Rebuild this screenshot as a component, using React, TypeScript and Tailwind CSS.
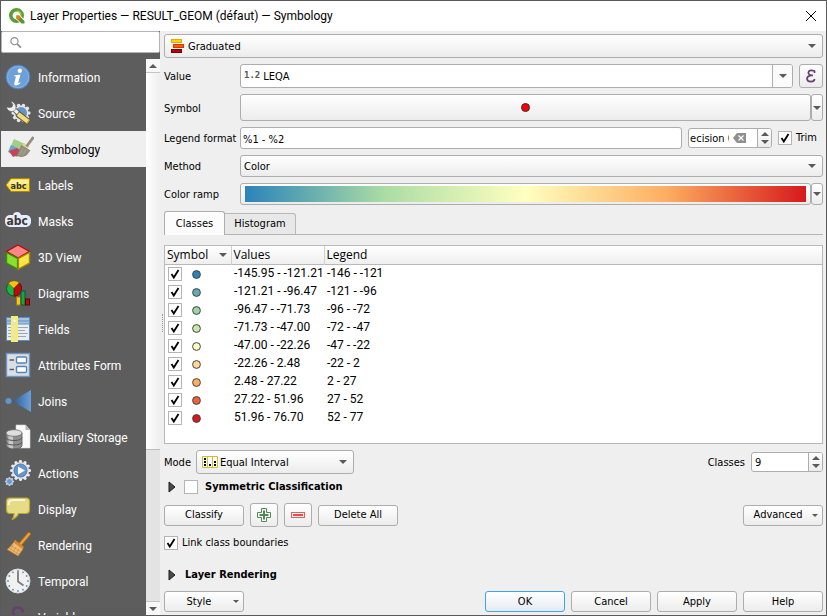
import { useId, useState } from "react";
import type { ReactNode } from "react";

const FRAME = "rounded-[3px] border border-[#adadad]";
const RAISED = "rounded-[3px] border border-[#adadad] bg-linear-to-b from-white to-[#ececec]";

function Triangle({ up = false, small = false }: { up?: boolean; small?: boolean }) {
  return (
    <svg
      className="block shrink-0"
      width={small ? 6 : 8}
      height={small ? 3 : 4}
      viewBox="0 0 8 4"
      aria-hidden="true"
    >
      <path d={up ? "M0 4L4 0L8 4Z" : "M0 0L4 4L8 0Z"} fill="#5a5a5a" />
    </svg>
  );
}

function Expander() {
  return (
    <svg className="block" width="8" height="12" viewBox="0 0 8 12" aria-hidden="true">
      <path d="M1 1L7 6L1 11Z" fill="#4a4a4a" stroke="#1c1c1c" />
    </svg>
  );
}

function Tick({ label, checked = false, id }: { label?: string; checked?: boolean; id?: string }) {
  const [on, setOn] = useState(checked);
  return (
    <span className="relative block size-[14px] shrink-0">
      <input
        id={id}
        type="checkbox"
        aria-label={label}
        checked={on}
        onChange={(e) => setOn(e.target.checked)}
        className="peer block size-[14px] appearance-none border border-[#b4b4b4] bg-white"
      />
      <svg
        className="pointer-events-none absolute inset-0 hidden peer-checked:block"
        width="14"
        height="14"
        viewBox="0 0 14 14"
        fill="none"
        stroke="#000"
        strokeWidth="1.8"
        aria-hidden="true"
      >
        <path d="M3.500 7L5.800 10.500L10.500 3" />
      </svg>
    </span>
  );
}

function Combo({
  id,
  value,
  icon,
  className,
  textClass,
}: {
  id: string;
  value: string;
  icon?: ReactNode;
  className: string;
  textClass: string;
}) {
  return (
    <div className={`relative ${className}`}>
      <select id={id} className={`block size-full appearance-none pt-[2px] ${RAISED} ${textClass}`}>
        <option>{value}</option>
      </select>
      {icon && (
        <span className="pointer-events-none absolute inset-y-0 left-[6px] flex items-center">{icon}</span>
      )}
      <span className="pointer-events-none absolute inset-y-0 right-[7px] flex items-center">
        <Triangle />
      </span>
    </div>
  );
}

function SpinArrows({ name }: { name: string }) {
  return (
    <span className="flex w-[14px] shrink-0 flex-col border-l border-[#adadad] bg-linear-to-b from-white to-[#ececec]">
      <button aria-label={`Increase ${name}`} className="flex flex-1 items-end justify-center pb-[2px]">
        <Triangle up />
      </button>
      <button aria-label={`Decrease ${name}`} className="flex flex-1 items-start justify-center pt-[2px]">
        <Triangle />
      </button>
    </span>
  );
}

function PushButton({ children, primary = false }: { children: ReactNode; primary?: boolean }) {
  return (
    <button
      className={`flex h-[21px] w-20 items-center justify-center rounded-[3px] border bg-linear-to-b from-white ${
        primary ? "border-[#3fa4f0] to-[#e4ebf2]" : "border-[#adadad] to-[#ececec]"
      }`}
    >
      {children}
    </button>
  );
}

function MenuButton({ children }: { children: ReactNode }) {
  return (
    <button className={`flex h-[21px] w-20 items-center pr-[4px] ${RAISED}`}>
      <span className="flex-1 text-center">{children}</span>
      <Triangle small />
    </button>
  );
}

function Icon({ children }: { children: ReactNode }) {
  return (
    <svg width="26" height="26" viewBox="0 0 26 26" className="block shrink-0" aria-hidden="true">
      {children}
    </svg>
  );
}

const gearTeeth = (cx: number, cy: number, r: number, n: number) =>
  Array.from({ length: n }, (_, i) => {
    const a = (i * 2 * Math.PI) / n;
    return { x: cx + r * Math.cos(a), y: cy + r * Math.sin(a) };
  });

const InformationIcon = (
  <Icon>
    <circle cx="13" cy="13" r="12" fill="#6e9fd6" stroke="#4a80bd" />
    <circle cx="13" cy="13" r="10.5" fill="none" stroke="#85b0e0" />
    <circle cx="14.8" cy="6.8" r="2.2" fill="#fff" />
    <path d="M9.5 11.2L15.5 10.6L13.3 18.2Q13 19.6 15.5 18.2L15.2 19.5Q12.5 21.8 10 21.3Q8.8 20.8 9.3 18.8L11 12.6L9.2 12.3Z" fill="#fff" />
  </Icon>
);

const SourceIcon = (
  <Icon>
    {gearTeeth(16, 13, 7.8, 10).map((p, i) => (
      <circle key={i} cx={p.x} cy={p.y} r="1.800" fill="#e4e6ea" />
    ))}
    <circle cx="16" cy="13" r="7.500" fill="#e4e6ea" />
    <circle cx="16" cy="13" r="6" fill="#6594c8" />
    <path d="M7 7.500L15 15" stroke="#4c4c4c" strokeWidth="4.600" />
    <path d="M7 7.500L15 15" stroke="#f0f0ee" strokeWidth="3.200" />
    <path d="M1.500 7C2 10.500 5.500 12.500 9 11C11.500 9.500 11.500 5.500 9.500 3.500C8.500 2 7 1.300 5.500 1.500L7.800 4.300L7 7L4.500 7.600Z" fill="#efefed" stroke="#5a5a5a" strokeWidth=".6" />
    <path d="M12.500 13.500L24 22.500" stroke="#5f5320" strokeWidth="6.200" />
    <path d="M13 14L23.500 22" stroke="#efdc83" strokeWidth="4.400" />
    <path d="M21.500 23.500L24.600 19.500" stroke="#b39832" />
  </Icon>
);

const SymbologyIcon = (
  <Icon>
    <path d="M6 3L17 8L12 13L3 10Z" fill="#9fce84" />
    <path d="M3 9L12 13L9 21L0 16Z" fill="#6ba6c8" />
    <path d="M1 15L9 12L15 17L5 21Z" fill="#c94358" />
    <path d="M16 7L21 10L18 16L12 12Z" fill="#dcd6a0" />
    <path d="M25.500 1L18.500 10.500" stroke="#968e7b" strokeWidth="2.800" />
    <path d="M13.500 9.500L22 14.500L18.500 19Q14 22 8.500 19.500Q11.500 15 13.500 9.500Z" fill="#969280" stroke="#76725f" strokeWidth=".6" />
    <path d="M15 12L11.500 19M18 13.500L14.500 19.500" stroke="#b0ac99" strokeWidth=".7" />
  </Icon>
);

const LabelsIcon = (
  <Icon>
    <path d="M1 13L6 6.500H24.500V19.500H6Z" fill="#fbe04b" stroke="#a98b08" />
    <path d="M3 12.500L6.500 8H23.500V11.500Z" fill="#fff09b" />
    <text x="5.500" y="16.500" fontSize="9" fontWeight="700" fontFamily="DejaVu Sans Condensed, DejaVu Sans, sans-serif" fill="#333">
      abc
    </text>
  </Icon>
);

const MasksIcon = (
  <Icon>
    <rect x="0" y="7" width="26" height="12" rx="5" fill="#e9edfb" />
    <rect x="8" y="4" width="8" height="12" rx="4" fill="#e9edfb" />
    <text x="1.500" y="17" fontSize="12" fontWeight="700" fontFamily="DejaVu Sans Condensed, DejaVu Sans, sans-serif" fill="#3a3a3a">
      abc
    </text>
  </Icon>
);

const CubeIcon = (
  <Icon>
    <path d="M13 1L24.500 7.500L13 14L1.500 7.500Z" fill="#fb8787" stroke="#b50d0d" strokeWidth="1.400" />
    <path d="M1.500 8.500L12.600 14.500V25L1.500 19Z" fill="#8be02f" stroke="#3d8c10" strokeWidth="1.400" />
    <path d="M24.500 8.500L13.400 14.500V25L24.500 19Z" fill="#fde548" stroke="#a38a09" strokeWidth="1.400" />
  </Icon>
);

const DiagramsIcon = (
  <Icon>
    <circle cx="9" cy="8.500" r="7.500" fill="#19b348" stroke="#075d20" />
    <path d="M9 8.500L3.300 3.200A7.800 7.800 0 0 1 14.500 3Z" fill="#fdbf10" stroke="#87640a" strokeWidth=".7" />
    <path d="M9 8.500L14.500 3A7.800 7.800 0 0 1 9 16.200Z" fill="#bb0c0c" stroke="#5e0303" strokeWidth=".7" />
    <rect x="11.500" y="17" width="4" height="8" fill="#fdc21b" stroke="#a77d05" />
    <rect x="16" y="11" width="4" height="14" fill="#16a351" stroke="#075b28" />
    <rect x="20.500" y="19" width="4" height="6" fill="#b40b0b" stroke="#5e0303" />
  </Icon>
);

const FieldsIcon = (
  <Icon>
    <rect x="1.500" y="1.500" width="23" height="23" fill="#e9eef3" stroke="#5d8dbf" />
    <rect x="2" y="2" width="22" height="6" fill="#a5c4e4" />
    <path d="M2 5H24M2 8H24" stroke="#5d8dbf" />
    <path d="M3 11.500H23M3 14.500H20M3 17.500H23M3 20.500H21" stroke="#9aa8b6" strokeWidth="1.200" />
    <rect x="6" y="0" width="7" height="26" fill="#f8ee5e" />
    <rect x="7.500" y="1" width="4" height="24" fill="#efe6a2" />
    <circle cx="9.500" cy="5" r="1.200" fill="#fff" />
  </Icon>
);

const FormIcon = (
  <Icon>
    <rect x="1.500" y="1.500" width="23" height="23" fill="#dcdfe2" stroke="#6b97c7" strokeWidth="1.400" />
    <rect x="11.500" y="5" width="10" height="6" rx="1" fill="#fff" stroke="#5486bb" strokeWidth="1.400" />
    <rect x="11.500" y="14.500" width="10" height="6" rx="1" fill="#fff" stroke="#5486bb" strokeWidth="1.400" />
    <path d="M4.500 8H9M4.500 17.500H9" stroke="#555f6b" strokeWidth="1.600" />
  </Icon>
);

const JoinsIcon = (
  <Icon>
    <defs>
      <linearGradient id="join" x1="0" x2="1">
        <stop offset="0" stopColor="#2f5b8f" />
        <stop offset="1" stopColor="#6ba0dc" />
      </linearGradient>
    </defs>
    <path d="M7.500 13L26 2V24Z" fill="url(#join)" />
    <circle cx="3.500" cy="13" r="3" fill="#5f94cf" />
  </Icon>
);

const StorageIcon = (
  <Icon>
    <path d="M11 1H20.500L25 6V24H11Z" fill="#fafafa" stroke="#d8d8d8" strokeWidth=".6" />
    <path d="M20.500 1V6H25Z" fill="#b8b8b8" />
    <path d="M1 9V21.500C1 26 17 26 17 21.500V9Z" fill="#8f8f8f" stroke="#565656" strokeWidth=".8" />
    <path d="M3.500 11V23Q6 24.500 8 24.500V12Z" fill="#c9c9c9" />
    <path d="M1 13.500C1 17.500 17 17.500 17 13.500M1 18C1 22 17 22 17 18" fill="none" stroke="#565656" />
    <ellipse cx="9" cy="9" rx="8" ry="3.300" fill="#dedede" stroke="#6d6d6d" strokeWidth=".8" />
  </Icon>
);

const ActionsIcon = (
  <Icon>
    {gearTeeth(15.5, 10.5, 9, 12).map((p, i) => (
      <circle key={i} cx={p.x} cy={p.y} r="1.600" fill="#e8e9ec" />
    ))}
    <circle cx="15.500" cy="10.500" r="8.600" fill="#e8e9ec" />
    <circle cx="15.500" cy="10.500" r="6.600" fill="#6495cb" stroke="#3f6ea6" strokeWidth=".8" />
    <path d="M13 6.500L20 10.500L13 14.500Z" fill="#fff" />
    {gearTeeth(4.5, 21.5, 3.6, 8).map((p, i) => (
      <circle key={i} cx={p.x} cy={p.y} r="1" fill="#c6d8ec" />
    ))}
    <circle cx="4.500" cy="21.500" r="3" fill="#6c9bd0" stroke="#c6d8ec" />
  </Icon>
);

const DisplayIcon = (
  <Icon>
    <path d="M5 2H21Q24.500 2 24.500 5.500V13.500Q24.500 17.500 21 17.500H13.500Q12 21.500 7 23.500Q9.500 20.500 9 17.500H5Q1.500 17.500 1.500 13.500V5.500Q1.500 2 5 2Z" fill="#e6dc88" stroke="#baa82f" strokeWidth="1.200" />
    <path d="M3.500 9Q3.500 4 8 4H20" fill="none" stroke="#f8f5d8" strokeWidth="2" />
  </Icon>
);

const RenderingIcon = (
  <Icon>
    <path d="M24 2L15 12.500" stroke="#b06a13" strokeWidth="4" strokeLinecap="round" />
    <path d="M24 2L15 12.500" stroke="#eea13b" strokeWidth="2.200" strokeLinecap="round" />
    <path d="M10 8.500L18.500 15L17.500 18L13 24L2 17.500Q6 14.500 10 8.500Z" fill="#efb873" stroke="#b37828" strokeWidth=".7" />
    <path d="M10 8L18.500 14.500L17.500 17L8.500 10.500Z" fill="#d88923" />
    <path d="M8 13L5 18.500M11 15L8 20M14 17L11 22M4 16L14 22.500M6.500 14L16 20" stroke="#c68b3f" strokeWidth=".6" />
  </Icon>
);

const TemporalIcon = (
  <Icon>
    <circle cx="13" cy="13" r="12" fill="#f1f1f0" stroke="#dcdcdc" />
    {gearTeeth(13, 13, 10, 12).map((p, i) => (
      <circle key={i} cx={p.x} cy={p.y} r=".9" fill="#5b8ec4" />
    ))}
    <path d="M13 3.500V13.500L18.500 17.500" fill="none" stroke="#787c80" strokeWidth="1.800" />
  </Icon>
);

const VariablesIcon = (
  <Icon>
    <path d="M18 8.500Q17.500 3.500 13 3.500Q8 3.500 8 8Q8 12 13 12.500Q7 13 7 18Q7 22 13 22Q18 22 19 17" fill="none" stroke="#663f73" strokeWidth="2.600" />
  </Icon>
);

const PAGES: { name: string; icon: ReactNode }[] = [
  { name: "Information", icon: InformationIcon },
  { name: "Source", icon: SourceIcon },
  { name: "Symbology", icon: SymbologyIcon },
  { name: "Labels", icon: LabelsIcon },
  { name: "Masks", icon: MasksIcon },
  { name: "3D View", icon: CubeIcon },
  { name: "Diagrams", icon: DiagramsIcon },
  { name: "Fields", icon: FieldsIcon },
  { name: "Attributes Form", icon: FormIcon },
  { name: "Joins", icon: JoinsIcon },
  { name: "Auxiliary Storage", icon: StorageIcon },
  { name: "Actions", icon: ActionsIcon },
  { name: "Display", icon: DisplayIcon },
  { name: "Rendering", icon: RenderingIcon },
  { name: "Temporal", icon: TemporalIcon },
  { name: "Variables", icon: VariablesIcon },
];

const CLASSES = [
  { color: "#2b83ba", values: "-145.95 - -121.21", legend: "-146 - -121" },
  { color: "#64abb0", values: "-121.21 - -96.47", legend: "-121 - -96" },
  { color: "#9dd3a7", values: "-96.47 - -71.73", legend: "-96 - -72" },
  { color: "#c7e9ad", values: "-71.73 - -47.00", legend: "-72 - -47" },
  { color: "#ffffbf", values: "-47.00 - -22.26", legend: "-47 - -22" },
  { color: "#fed790", values: "-22.26 - 2.48", legend: "-22 - 2" },
  { color: "#fdae61", values: "2.48 - 27.22", legend: "2 - 27" },
  { color: "#ea633e", values: "27.22 - 51.96", legend: "27 - 52" },
  { color: "#d7191c", values: "51.96 - 76.70", legend: "52 - 77" },
];

function TitleBar() {
  return (
    <header className="flex h-[30px] shrink-0 items-center bg-white pr-[10px] pl-[8px] font-['Roboto',sans-serif] text-[12px] text-black">
      <svg width="16" height="16" viewBox="0 0 16 16" aria-hidden="true">
        <circle cx="7.500" cy="7.500" r="5.700" fill="none" stroke="#5a9f35" strokeWidth="3.600" />
        <path d="M8 3A4.500 4.500 0 0 1 12 7.500" fill="none" stroke="#a4c93c" strokeWidth="1.400" />
        <path d="M6.500 6.500H10.500L16 12.500V16H12L6.500 10.500Z" fill="#fff" />
        <path d="M7.500 7.500H10L15.500 13V15.500H12.500L7.500 10.500Z" fill="#589632" />
        <path d="M7.500 7.500H10L12 9.500L9.500 12L7.500 10.500Z" fill="#ee7913" />
      </svg>
      <h1 className="ml-[5px] flex-1">Layer Properties — RESULT_GEOM (défaut) — Symbology</h1>
      <button aria-label="Close">
        <svg width="10" height="10" viewBox="0 0 10 10" stroke="#000" aria-hidden="true">
          <path d="M0 0L10 10M10 0L0 10" />
        </svg>
      </button>
    </header>
  );
}

function Sidebar() {
  const [current, setCurrent] = useState("Symbology");
  return (
    <aside className="flex w-[159px] shrink-0 flex-col bg-[#5d5d5d]">
      <label className="flex h-[22px] shrink-0 items-center rounded-[2px] border border-[#b4b4b4] bg-white px-[8px]">
        <svg width="13" height="13" viewBox="0 0 13 13" fill="none" stroke="#8d8d8d" strokeWidth="1.300" aria-hidden="true">
          <circle cx="5" cy="5" r="4" />
          <path d="M8 8L12.300 12.300" strokeWidth="1.800" />
        </svg>
        <input aria-label="Search settings" className="ml-1 w-full min-w-0 outline-none" />
      </label>
      <div className="mt-[6px] flex min-h-0 flex-1">
        <nav className="min-w-0 flex-1 overflow-hidden font-['Roboto',sans-serif] text-[12px]">
          {PAGES.map((page) => (
            <button
              key={page.name}
              onClick={() => setCurrent(page.name)}
              aria-current={page.name === current ? "page" : undefined}
              className={`flex h-9 w-full items-center gap-[7px] whitespace-nowrap ${
                page.name === current ? "bg-[#efefef] pl-[7px] text-black" : "pl-[4px] text-white"
              }`}
            >
              {page.icon}
              <span className="pt-[2px]">{page.name}</span>
            </button>
          ))}
        </nav>
        <div className="flex w-[14px] shrink-0 flex-col bg-[#e3e3e3]">
          <div className="flex h-[14px] items-center justify-center border-b border-[#c4c4c4] bg-[#f7f7f7]">
            <Triangle up />
          </div>
          <div className="h-[377px] border-b border-[#bdbdbd] bg-linear-to-r from-white to-[#eeeeee]" />
          <div className="flex-1" />
          <div className="flex h-[14px] items-center justify-center border-t border-[#c4c4c4] bg-[#f7f7f7]">
            <Triangle />
          </div>
        </div>
      </div>
    </aside>
  );
}

function SettingsForm() {
  const id = useId();
  return (
    <div className="grid grid-cols-[76px_minmax(0,1fr)] items-center gap-y-[6px]">
      <Combo
        id={`${id}-renderer`}
        value="Graduated"
        className="col-span-2 h-6"
        textClass="pl-[23px]"
        icon={
          <svg width="16" height="16" viewBox="0 0 16 16" aria-hidden="true">
            <rect x="1.500" y="1.500" width="10" height="3" fill="#ffd500" stroke="#f0a500" />
            <rect x="3.500" y="6.500" width="10" height="3" fill="#ff5a0a" stroke="#d43800" />
            <rect x="1.500" y="11.500" width="10" height="3" fill="#b80000" stroke="#7a0000" />
          </svg>
        }
      />

      <label htmlFor={`${id}-value`} className="pt-[2px]">
        Value
      </label>
      <div className="flex h-6 gap-[6px]">
        <div className={`flex flex-1 overflow-hidden bg-white ${FRAME}`}>
          <span className="flex items-center pb-[2px] pl-[3px] font-['DejaVu_Sans_Mono',monospace] text-[9px] font-bold text-[#555]">
            1.2
          </span>
          <input id={`${id}-value`} defaultValue="LEQA" className="min-w-0 flex-1 pt-[2px] pl-[3px] outline-none" />
          <button aria-label="Choose a field" className="flex w-[20px] items-center justify-center border-l border-[#adadad] bg-[#fbfbfb]">
            <Triangle />
          </button>
        </div>
        <button aria-label="Expression" className={`flex w-6 items-center justify-center ${RAISED}`}>
          <svg width="12" height="14" viewBox="0 0 12 14" fill="none" stroke="#663f73" strokeWidth="1.700" aria-hidden="true">
            <path d="M9.500 4V2Q5.500 .5 3.800 2.300Q2.500 5.500 6 6.300H8M6 6.300Q2 7 2 9.800Q2.500 12.800 6 12.600Q9.500 12.500 9.500 10" />
          </svg>
        </button>
      </div>

      <span className="pt-[2px]">Symbol</span>
      <div className="flex h-[27px]">
        <button aria-label="Symbol" className={`flex flex-1 items-center justify-center ${RAISED}`}>
          <span className="size-[9px] rounded-full border border-[#333] bg-[#f00]" />
        </button>
        <button aria-label="Symbol options" className={`flex w-[12px] items-center justify-center ${RAISED}`}>
          <Triangle />
        </button>
      </div>

      <label htmlFor={`${id}-legend`} className="pt-[2px] whitespace-nowrap">
        Legend format
      </label>
      <div className="flex h-[22px] items-center gap-[6px]">
        <input
          id={`${id}-legend`}
          defaultValue="%1 - %2"
          className={`h-full min-w-0 flex-1 bg-white pt-[2px] pl-[2px] outline-none ${FRAME}`}
        />
        <div className={`flex h-5 w-[84px] overflow-hidden bg-white ${FRAME}`}>
          <input aria-label="Precision" defaultValue="ecision 0" className="w-[40px] min-w-0 pt-[2px] pl-[1px] outline-none" />
          <button aria-label="Clear precision" className="flex flex-1 items-center pl-[4px]">
            <svg width="13" height="10" viewBox="0 0 13 10" aria-hidden="true">
              <path d="M0 5L4 0H13V10H4Z" fill="#8f8f8f" />
              <path d="M5.500 2.500L10.500 7.500M10.500 2.500L5.500 7.500" stroke="#fff" strokeWidth="1.200" />
            </svg>
          </button>
          <SpinArrows name="precision" />
        </div>
        <div className="flex items-center gap-[4px] pr-[6px]">
          <Tick id={`${id}-trim`} checked />
          <label htmlFor={`${id}-trim`}>Trim</label>
        </div>
      </div>

      <label htmlFor={`${id}-method`} className="pt-[2px]">
        Method
      </label>
      <Combo id={`${id}-method`} value="Color" className="h-[22px]" textClass="pl-[3px]" />

      <span className="pt-[2px]">Color ramp</span>
      <div className="flex h-[22px]">
        <button aria-label="Color ramp" className={`flex flex-1 px-[4px] py-[2px] ${RAISED}`}>
          <span className="block size-full bg-[linear-gradient(90deg,#2b83ba_0%,#abdda4_25%,#ffffbf_50%,#fdae61_75%,#d7191c_100%)]" />
        </button>
        <button aria-label="Color ramp options" className={`flex w-[12px] items-center justify-center ${RAISED}`}>
          <Triangle />
        </button>
      </div>
    </div>
  );
}

function ClassTable() {
  return (
    <div className="mt-[10px] min-h-0 flex-1 overflow-hidden border border-[#b9b9b9] bg-white font-['Roboto',sans-serif] text-[12px]">
      <table className="w-full table-fixed border-collapse text-left">
        <colgroup>
          <col className="w-[66px]" />
          <col className="w-[93px]" />
          <col />
        </colgroup>
        <thead>
          <tr className="h-[18px] border-b border-[#b9b9b9] bg-linear-to-b from-white to-[#efefef] font-['Open_Sans',sans-serif] leading-[18px]">
            <th className="border-r border-[#d0d0d0] p-0 pl-[2px] font-normal">
              <span className="flex items-center justify-between pr-[4px]">
                Symbol
                <Triangle />
              </span>
            </th>
            <th className="border-r border-[#d0d0d0] p-0 pl-[2px] font-normal">Values</th>
            <th className="p-0 pl-[2px] font-normal">Legend</th>
          </tr>
        </thead>
        <tbody>
          {CLASSES.map((row) => (
            <tr key={row.values} className="h-[18px] leading-[16px] whitespace-nowrap">
              <td className="p-0">
                <span className="flex h-[18px] items-center gap-[10px] pl-[3px]">
                  <Tick label={`Show class ${row.values}`} checked />
                  <svg width="9" height="9" viewBox="0 0 9 9" aria-hidden="true">
                    <circle cx="4.500" cy="4.500" r="3.900" fill={row.color} stroke="#444" />
                  </svg>
                </span>
              </td>
              <td className="p-0 pl-[3px] align-top">{row.values}</td>
              <td className="p-0 pl-[3px] align-top">{row.legend}</td>
            </tr>
          ))}
        </tbody>
      </table>
    </div>
  );
}

function ModeRow() {
  const id = useId();
  return (
    <div className="mt-[6px] flex h-6 shrink-0 items-center">
      <label htmlFor={`${id}-mode`} className="w-8 pt-[2px]">
        Mode
      </label>
      <Combo
        id={`${id}-mode`}
        value="Equal Interval"
        className="h-6 w-[158px]"
        textClass="pl-[23px]"
        icon={
          <svg width="16" height="12" viewBox="0 0 16 12" aria-hidden="true">
            <path d="M.5 .5H15.500V11.500H.5ZM5.500 .5V11.500M10.500 .5V11.500" fill="#fff" stroke="#d2bd2f" />
            <path d="M3 2V10M8 8V10M13 5V10" stroke="#000" strokeWidth="2" strokeDasharray="2 1" />
          </svg>
        }
      />
      <label htmlFor={`${id}-classes`} className="ml-auto pt-[2px]">
        Classes
      </label>
      <div className={`ml-[6px] flex h-5 w-[72px] overflow-hidden bg-white ${FRAME}`}>
        <input id={`${id}-classes`} defaultValue="9" className="min-w-0 flex-1 pt-[2px] pl-[3px] outline-none" />
        <SpinArrows name="classes" />
      </div>
    </div>
  );
}

export default function App() {
  const id = useId();
  return (
    <div className="flex h-screen flex-col border border-[#5a5a5a] bg-[#efefef] font-['DejaVu_Sans_Condensed','DejaVu_Sans',sans-serif] text-[11px] leading-[14px] text-black">
      <TitleBar />
      <div className="flex min-h-0 flex-1">
        <Sidebar />
        <div className="flex w-[4px] shrink-0 items-center justify-center">
          <span className="h-[18px] border-l border-dotted border-[#999]" />
        </div>
        <main className="flex min-w-0 flex-1 flex-col pt-[3px] pr-[3px] pb-[3px]">
          <SettingsForm />
          <div role="tablist" className="mt-[6px] flex h-6 shrink-0 items-end border-b border-[#b4b4b4]">
            <button role="tab" aria-selected="true" className="-mb-px h-6 w-[61px] rounded-t-[3px] border border-b-0 border-[#adadad] bg-[#fcfcfc]">
              Classes
            </button>
            <button role="tab" aria-selected="false" className="h-[21px] w-[71px] rounded-tr-[3px] border border-b-0 border-l-0 border-[#b9b9b9] bg-[#e8e8e8]">
              Histogram
            </button>
          </div>
          <ClassTable />
          <ModeRow />
          <div className="mt-[5px] flex h-[16px] shrink-0 items-center pl-[4px]">
            <button aria-label="Expand symmetric classification" className="mr-[8px]">
              <Expander />
            </button>
            <Tick id={`${id}-symmetric`} />
            <label htmlFor={`${id}-symmetric`} className="ml-[7px] font-bold">
              Symmetric Classification
            </label>
          </div>
          <div className="mt-[8px] flex h-6 shrink-0 items-center gap-[6px]">
            <PushButton>Classify</PushButton>
            <button aria-label="Add class" className={`flex h-6 w-7 items-center justify-center ${RAISED}`}>
              <svg width="14" height="14" viewBox="0 0 14 14" fill="none" aria-hidden="true">
                <path d="M4.500 .5H9.500V4.500H13.500V9.500H9.500V13.500H4.500V9.500H.5V4.500H4.500Z" fill="#fff" stroke="#4d8a50" />
                <path d="M7 2.500V11.500M2.500 7H11.500" stroke="#4d8a50" strokeWidth="2" />
              </svg>
            </button>
            <button aria-label="Delete class" className={`flex h-6 w-7 items-center justify-center ${RAISED}`}>
              <svg width="14" height="6" viewBox="0 0 14 6" aria-hidden="true">
                <rect x=".5" y=".5" width="13" height="5" fill="#fff" stroke="#ee5a5a" />
                <path d="M2 3H12" stroke="#ee4a4a" strokeWidth="2" />
              </svg>
            </button>
            <PushButton>Delete All</PushButton>
            <div className="ml-auto">
              <MenuButton>Advanced</MenuButton>
            </div>
          </div>
          <div className="mt-[8px] flex h-4 shrink-0 items-center gap-[4px]">
            <Tick id={`${id}-link`} checked />
            <label htmlFor={`${id}-link`}>Link class boundaries</label>
          </div>
          <div className="mt-[16px] flex h-4 shrink-0 items-center gap-[9px] pl-[4px]">
            <button aria-label="Expand layer rendering">
              <Expander />
            </button>
            <h2 className="font-bold">Layer Rendering</h2>
          </div>
          <footer className="mt-[8px] flex shrink-0 gap-[6px]">
            <MenuButton>Style</MenuButton>
            <div className="ml-auto flex gap-[6px]">
              <PushButton primary>OK</PushButton>
              <PushButton>Cancel</PushButton>
              <PushButton>Apply</PushButton>
              <PushButton>Help</PushButton>
            </div>
          </footer>
        </main>
      </div>
    </div>
  );
}
